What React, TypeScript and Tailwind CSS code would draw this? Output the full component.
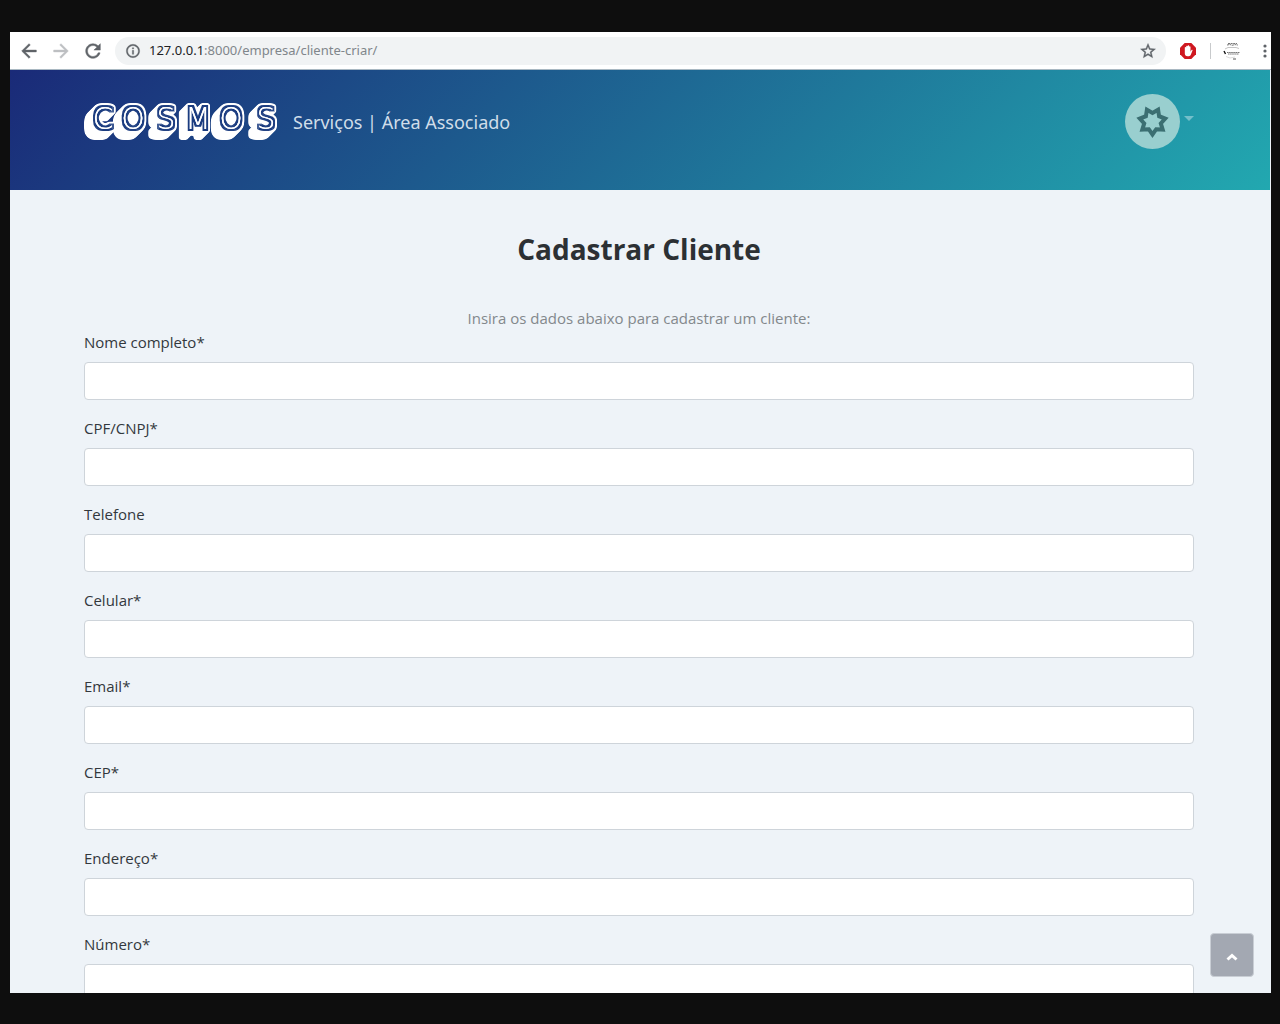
import { MdRefresh, MdArrowBack, MdArrowForward, MdInfoOutline, MdStarBorder } from 'react-icons/md';

const fields = [
  { name: 'nome', label: 'Nome completo*', type: 'text' },
  { name: 'documento', label: 'CPF/CNPJ*', type: 'text' },
  { name: 'telefone', label: 'Telefone', type: 'tel' },
  { name: 'celular', label: 'Celular*', type: 'tel' },
  { name: 'email', label: 'Email*', type: 'email' },
  { name: 'cep', label: 'CEP*', type: 'text' },
  { name: 'endereco', label: 'Endereço*', type: 'text' },
  { name: 'numero', label: 'Número*', type: 'text' },
];

/* Inline lettering: a white core line, a navy band, a white rim and a block shadow. */
function Logo() {
  return (
    <svg className="h-[38px] w-[195px] shrink-0" viewBox="0 0 195 38">
      <defs>
        <filter id="inline-letters" filterUnits="userSpaceOnUse" x="0" y="0" width="195" height="38" colorInterpolationFilters="sRGB">
          <feMorphology in="SourceGraphic" operator="dilate" radius="3" result="square" />
          <feGaussianBlur in="square" stdDeviation="0.9" result="soft" />
          <feComponentTransfer in="soft" result="rim">
            <feFuncA type="linear" slope="5" intercept="-0.6" />
          </feComponentTransfer>
          <feMorphology in="SourceAlpha" operator="dilate" radius="2" result="band" />
          <feFlood floodColor="#1b3c80" />
          <feComposite in2="band" operator="in" result="navy" />
          <feOffset in="rim" dx="-1" dy="1" result="o1" />
          <feMerge result="s1"><feMergeNode in="rim" /><feMergeNode in="o1" /></feMerge>
          <feOffset in="s1" dx="-2" dy="2" result="o2" />
          <feMerge result="s2"><feMergeNode in="s1" /><feMergeNode in="o2" /></feMerge>
          <feOffset in="s2" dx="-4" dy="4" result="o3" />
          <feMerge>
            <feMergeNode in="o3" />
            <feMergeNode in="s2" />
            <feMergeNode in="navy" />
            <feMergeNode in="SourceGraphic" />
            <feMergeNode in="SourceGraphic" />
          </feMerge>
        </filter>
      </defs>
      <text
        x="19 49 82 114 147 182"
        y="26"
        fill="#fff"
        fontFamily="'DejaVu Sans', sans-serif"
        fontWeight="200"
        fontSize="30"
        textAnchor="middle"
        filter="url(#inline-letters)"
      >
        COSMOS
      </text>
    </svg>
  );
}

function starPoints(outer: number, inner: number) {
  return Array.from({ length: 14 }, (_, i) => {
    const r = i % 2 ? inner : outer;
    const a = Math.PI / 2 + (i * Math.PI) / 7;
    return `${(27.5 + r * Math.cos(a)).toFixed(1)},${(27.5 + r * Math.sin(a)).toFixed(1)}`;
  }).join(' ');
}

function Avatar() {
  return (
    <svg className="size-[55px]" viewBox="0 0 55 55" aria-hidden="true">
      <circle cx="27.5" cy="27.5" r="27.5" fill="#99cfcf" />
      <polygon points={starPoints(13, 8.5)} fill="none" stroke="#3b6f72" strokeWidth="4" />
    </svg>
  );
}

function BlockerIcon() {
  return (
    <svg className="size-4" viewBox="0 0 16 16" aria-hidden="true">
      <polygon points="4.7,0 11.3,0 16,4.7 16,11.3 11.3,16 4.7,16 0,11.3 0,4.7" fill="#cf1820" />
      <path
        d="M4.8 8.6V4.6a.7.7 0 0 1 1.4 0V3.5a.75.75 0 0 1 1.5 0V3a.75.75 0 0 1 1.5 0v.7a.7.7 0 0 1 1.3 0v5l1-1.6c.5-.6 1.3-.2 1 .5l-1.6 3.9c-.4 1-1.1 1.7-2.1 1.7H7.5c-1.7 0-2.7-1-2.7-2.6z"
        fill="#fff"
      />
    </svg>
  );
}

function ProfileSketch() {
  return (
    <svg className="size-[18px]" viewBox="0 0 18 18" fill="none" stroke="#777" strokeWidth="1" aria-hidden="true">
      <path d="M5 1.5h9M4 3l3-.5 2 .8 3-.7 3 .4" strokeDasharray="2 .6" />
      <path d="M2 7l3-1.5h8l3 1" stroke="#c4c4c4" />
      <path d="M4 10.5h13M5 12h11" strokeDasharray="1.6 .5" />
      <path d="M1 9l1.5 3" stroke="#111" strokeWidth="1.4" />
      <path d="M3 14.5l4 1.5 5-1" stroke="#ddd" />
      <path d="M10 17h3" stroke="#555" />
    </svg>
  );
}

function BrowserBar() {
  return (
    <div className="flex h-[38px] shrink-0 items-center border-b border-[#a9b8c2] bg-white pr-1 pl-2 text-[#5f6368]">
      <div className="mr-[11px] flex gap-2.5">
        <button type="button" aria-label="Voltar">
          <MdArrowBack size={22} className="[&>path]:stroke-current [&>path]:stroke-[0.5] [&>path:first-child]:stroke-none" />
        </button>
        <button type="button" aria-label="Avançar" className="text-[#bdbfc2]">
          <MdArrowForward size={22} className="[&>path]:stroke-current [&>path]:stroke-[0.5] [&>path:first-child]:stroke-none" />
        </button>
        <button type="button" aria-label="Recarregar">
          <MdRefresh size={22} className="[&>path]:stroke-current [&>path]:stroke-[0.5] [&>path:first-child]:stroke-none" />
        </button>
      </div>
      <div className="flex h-7 min-w-0 grow items-center rounded-full bg-[#f1f3f4] pr-[9px] pl-2.5">
        <MdInfoOutline size={16} className="mr-2 [&>path]:stroke-current [&>path]:stroke-[0.5] [&>path:first-child]:stroke-none" />
        <p className="grow font-['Noto_Sans',sans-serif] text-[13px] text-[#80868b]">
          <span className="text-[#202124]">127.0.0.1</span>:8000/empresa/cliente-criar/
        </p>
        <button type="button" aria-label="Adicionar aos favoritos">
          <MdStarBorder size={18} className="[&>path]:stroke-current [&>path]:stroke-[0.5] [&>path:first-child]:stroke-none" />
        </button>
      </div>
      <button type="button" aria-label="Bloqueador" className="mx-3.5"><BlockerIcon /></button>
      <div className="mr-3 h-4 w-px bg-[#c8cacc]" />
      <button type="button" aria-label="Perfil" className="mr-5"><ProfileSketch /></button>
      <button type="button" aria-label="Menu">
        <svg className="h-4 w-1.5" viewBox="0 0 6 16" fill="currentColor" aria-hidden="true">
          <circle cx="4" cy="3" r="1.6" />
          <circle cx="4" cy="8" r="1.6" />
          <circle cx="4" cy="13" r="1.6" />
        </svg>
      </button>
    </div>
  );
}

function SiteHeader() {
  return (
    <header className="mr-px h-[120px] shrink-0 bg-[linear-gradient(135deg,#1a2a78,#22a8b0)] pt-6 pr-[18px] pl-4">
      <div className="mx-auto flex max-w-[1110px] items-center">
        <a href="#inicio"><Logo /></a>
        <nav className="ml-3.5 grow pt-0.5 font-['Noto_Sans',sans-serif] text-[18px] text-[#d0dde9]">
          <a href="#servicos">Serviços</a> | <a href="#associado">Área Associado</a>
        </nav>
        <button type="button" aria-label="Conta" className="flex items-center gap-1">
          <Avatar />
          <svg className="mb-1.5 h-[5px] w-2.5" viewBox="0 0 10 5" fill="#74bfca" aria-hidden="true">
            <path d="M0 0h10L5 5z" />
          </svg>
        </button>
      </div>
    </header>
  );
}

export default function App() {
  return (
    <div className="flex h-screen flex-col bg-[#0e0e0e] pt-8 pr-[9px] pb-[31px] pl-2.5">
      <div className="relative flex min-h-0 grow flex-col overflow-hidden bg-[#eef3f8]">
        <BrowserBar />
        <SiteHeader />
        <main className="pt-[41px] pr-[19px] pl-4 font-['Open_Sans',sans-serif] text-[15px] leading-6 text-[#33383d]">
          <div className="mx-auto max-w-[1110px]">
            <h1 className="mb-[39px] text-center text-[28px] leading-9 font-bold text-[#2c3034]">Cadastrar Cliente</h1>
            <p className="text-center text-[#83888c]">Insira os dados abaixo para cadastrar um cliente:</p>
            <form>
              {fields.map((field) => (
                <div key={field.name} className="mb-4">
                  <label htmlFor={field.name} className="mb-2 block">{field.label}</label>
                  <input
                    id={field.name}
                    name={field.name}
                    type={field.type}
                    className="block h-[38px] w-full rounded border border-[#ced4da] bg-white px-3"
                  />
                </div>
              ))}
            </form>
          </div>
        </main>
        <button
          type="button"
          aria-label="Voltar ao topo"
          className="absolute right-[17px] bottom-4 flex size-11 items-center justify-center rounded border border-[#c9ced5] bg-[#a3a8b2] pt-1 text-white"
        >
          <svg className="h-2 w-3" viewBox="0 0 12 8" fill="none" stroke="currentColor" strokeWidth="3" aria-hidden="true">
            <path d="M1.5 6.5L6 2.5l4.5 4" />
          </svg>
        </button>
      </div>
    </div>
  );
}
